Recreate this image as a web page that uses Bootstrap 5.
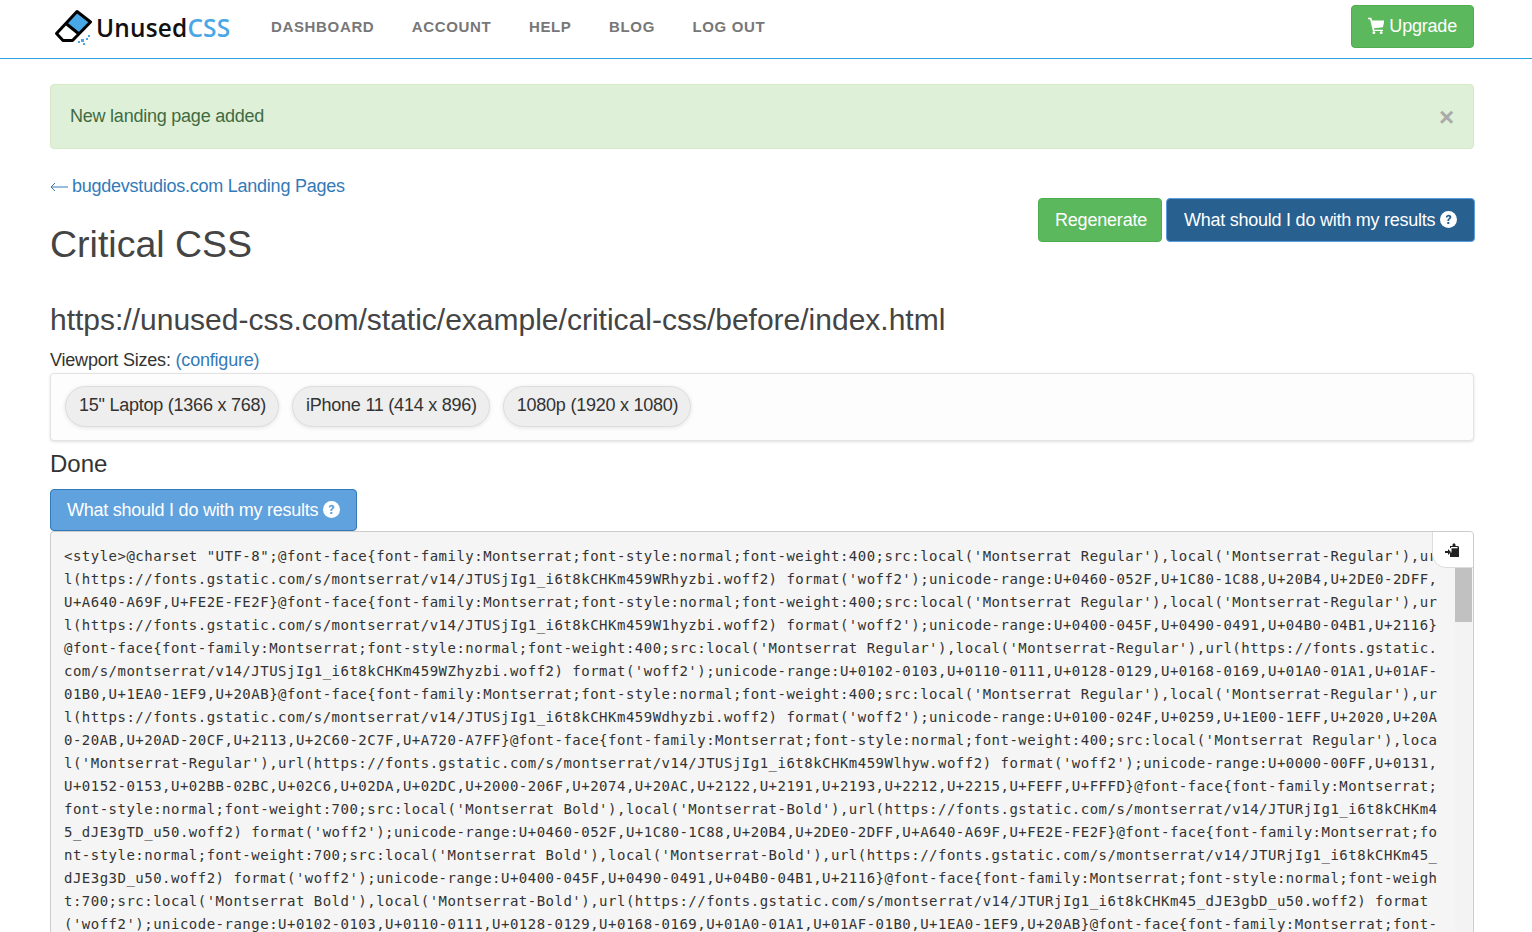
<!DOCTYPE html>
<html lang="en"><head><meta charset="utf-8"><title>Critical CSS</title>
<link href="https://cdn.jsdelivr.net/npm/bootstrap@5.3.0/dist/css/bootstrap.min.css" rel="stylesheet">
<style>
html,body{height:932px;overflow:hidden}
body{font-family:"Liberation Sans",Arial,sans-serif;font-size:18px;color:#333;background:#fff;line-height:1.42857}
a{text-decoration:none;color:#337ab7}
.topbar{height:59px;border-bottom:1px solid #2aa3e6;padding:5px 58px 0 54px}
.brand-word{font-family:"Open Sans",sans-serif;font-weight:600;font-size:24.4px;line-height:1;color:#111;letter-spacing:.2px;padding-top:3px;margin-left:-2px}
.brand-word span{color:#48a7e4}
.brand-box{width:217px}
.menu-link{font-family:"Liberation Sans",sans-serif;font-weight:700;font-size:15px;letter-spacing:.65px;color:#777;text-transform:uppercase}
.menu{gap:37.5px}
.page{padding:25px 58px 0 50px}
.btn-flat{font-size:18px;line-height:24px;padding:9px 16px;border-radius:4px;color:#fff;border:1px solid;letter-spacing:-.2px;white-space:nowrap}
.btn-go,.btn-go:hover{background:#5cb85c;border-color:#4cae4c;color:#fff}
.btn-up{height:43px;width:123px;padding-top:8px;padding-bottom:10px}
.up-label{margin-left:5px;margin-top:1px}
.btn-dark-blue,.btn-dark-blue:hover{background:#286090;border-color:#5b9de0;color:#fff;margin-left:4px;height:44px;width:309px;padding-left:16px;letter-spacing:-.25px}
.btn-regen{height:44px;width:124px}
.btn-mid,.btn-mid:hover{background:#5fa2dd;border-color:#337ab7;color:#fff;height:42px;width:307px;padding-top:8px;letter-spacing:-.25px}
.note{height:65px;background:#dff0d8;border:1px solid #d6e9c6;border-radius:4px;color:#3f6b42;padding:0 19px;margin:0;letter-spacing:-.23px}
.note-x{color:#aaa;font-weight:700;font-size:26px;line-height:1;margin-right:0}
.back{height:26px;margin-top:25px;letter-spacing:-.24px}
.back svg{margin-right:4px;vertical-align:0}
.head-row{height:120px}
.main-title{font-size:37.5px;font-weight:400;color:#444;margin:0;line-height:40px;padding-top:24px}
.head-btns{margin-top:-2px;margin-right:-1px}
.url-title{font-size:30px;font-weight:400;color:#444;line-height:40px;margin:-20px 0 0}
.vp-line{line-height:26px;margin-top:7px;height:26px;letter-spacing:-.2px}
.chip-well{height:68px;border:1px solid #e3e3e3;border-radius:4px;background:#fdfdfd;box-shadow:0 1px 3px rgba(0,0,0,.12);padding:12px 14px;gap:13px}
.chip-item{height:41px;border:1px solid #ddd;border-radius:21px;background:#eee;padding:0 12px 0 13px;line-height:37px;color:#333;box-shadow:0 1px 4px rgba(0,0,0,.1);letter-spacing:-.24px;white-space:nowrap}
.done-text{font-size:24px;font-weight:400;line-height:34px;margin:6px 0 8px;color:#333}
.code-wrap{position:relative;height:460px;border:1px solid #ccc;border-radius:4px 4px 0 0;background:#f5f5f5;overflow:hidden}
.code-text{margin:0;padding:13px 0 0 13px;font-family:"DejaVu Sans Mono",monospace;font-size:14px;letter-spacing:.49px;line-height:23px;color:#333;white-space:pre;overflow:hidden;height:440px}
.copy-tab{position:absolute;right:-1px;top:-1px;width:42px;height:37px;background:#fff;border:1px solid #ddd;border-radius:0 4px 0 14px}
.bar-track{position:absolute;right:1px;top:36px;bottom:0;width:17px;background:#f3f3f3}
.bar-thumb{position:absolute;left:0;top:0;width:17px;height:54px;background:#c1c1c1}
.ico{vertical-align:-2px}
</style></head><body>
<nav class="topbar d-flex align-items-start justify-content-between">
  <div class="d-flex align-items-center" style="height:43px">
    <a href="#" class="brand-box d-flex align-items-center gap-1">
      <svg width="40" height="36" viewBox="0 0 40 36"><path d="M2 25 L21 6 L28 1.500 L37 9 L34 15 L18 32 H9 Z" fill="#fff"/><path d="M12 15 L23 3 L36 13 L25 25 Z" fill="#48a7e4"/><path d="M23 2.500 L36.500 13 L18.500 31.500 H9 L2.500 24.500 Z M12 14.500 L25 25" fill="none" stroke="#000" stroke-width="3" stroke-linejoin="round"/><g fill="#48a7e4"><rect x="27" y="30" width="3" height="3"/><rect x="32" y="29" width="2" height="2"/><rect x="34" y="26" width="2" height="2"/><rect x="29" y="34" width="2" height="2"/><rect x="24" y="32" width="2" height="2"/></g></svg>
      <span class="brand-word">Unused<span>CSS</span></span>
    </a>
    <div class="menu d-flex">
      <a href="#" class="menu-link">Dashboard</a><a href="#" class="menu-link">Account</a><a href="#" class="menu-link">Help</a><a href="#" class="menu-link">Blog</a><a href="#" class="menu-link">Log out</a>
    </div>
  </div>
  <a href="#" class="btn btn-flat btn-go btn-up d-flex align-items-center justify-content-center"><svg width="18" height="18" viewBox="0 0 18 18"><path d="M0 0h3.500l1.200 3H18l-1.500 7.500-10 1 .3 1.500H16.500v1.500H5.300L2.300 1.500H0z" fill="#fff"/><circle cx="6.500" cy="16.300" r="1.600" fill="#fff"/><circle cx="14.500" cy="16.300" r="1.600" fill="#fff"/></svg><span class="up-label">Upgrade</span></a>
</nav>
<main class="page">
  <div class="note alert d-flex align-items-center justify-content-between rounded-1"><span>New landing page added</span><span class="note-x">&times;</span></div>
  <div class="back"><a href="#"><svg width="18" height="10" viewBox="0 0 18 10"><path d="M18 5H1M5 1L1 5l4 4" fill="none" stroke="#337ab7" stroke-width="1"/></svg>bugdevstudios.com Landing Pages</a></div>
  <div class="head-row d-flex justify-content-between">
    <h1 class="main-title">Critical CSS</h1>
    <div class="head-btns d-flex align-items-start">
      <a href="#" class="btn btn-flat btn-go btn-regen">Regenerate</a>
      <a href="#" class="btn btn-flat btn-dark-blue">What should I do with my results <svg class="ico" width="17" height="17" viewBox="0 0 17 17"><circle cx="8.500" cy="8.500" r="8.500" fill="#fff"/><path d="M5.800 6.400c.1-1.700 1.300-2.600 2.900-2.600 1.600 0 2.700 1 2.700 2.300 0 1.100-.6 1.700-1.400 2.200-.6.4-.8.7-.8 1.300v.3H7.400v-.5c0-.9.400-1.500 1.100-2 .6-.4.900-.7.900-1.100 0-.5-.4-.8-.9-.8-.6 0-1 .4-1 1zM7.300 11h2v2h-2z" fill="#286090"/></svg></a>
    </div>
  </div>
  <h2 class="url-title">https://unused-css.com/static/example/critical-css/before/index.html</h2>
  <div class="vp-line">Viewport Sizes: <a href="#">(configure)</a></div>
  <div class="chip-well d-flex">
    <span class="chip-item">15" Laptop (1366 x 768)</span>
    <span class="chip-item">iPhone 11 (414 x 896)</span>
    <span class="chip-item">1080p (1920 x 1080)</span>
  </div>
  <h3 class="done-text">Done</h3>
  <a href="#" class="btn btn-flat btn-mid d-block">What should I do with my results <svg class="ico" width="17" height="17" viewBox="0 0 17 17"><circle cx="8.500" cy="8.500" r="8.500" fill="#fff"/><path d="M5.800 6.400c.1-1.700 1.300-2.600 2.900-2.600 1.600 0 2.700 1 2.700 2.300 0 1.100-.6 1.700-1.400 2.200-.6.4-.8.7-.8 1.300v.3H7.400v-.5c0-.9.400-1.500 1.100-2 .6-.4.900-.7.900-1.100 0-.5-.4-.8-.9-.8-.6 0-1 .4-1 1zM7.300 11h2v2h-2z" fill="#5fa2dd"/></svg></a>
  <div class="code-wrap">
<pre class="code-text">&lt;style&gt;@charset "UTF-8";@font-face{font-family:Montserrat;font-style:normal;font-weight:400;src:local('Montserrat Regular'),local('Montserrat-Regular'),ur
l(https://fonts.gstatic.com/s/montserrat/v14/JTUSjIg1_i6t8kCHKm459WRhyzbi.woff2) format('woff2');unicode-range:U+0460-052F,U+1C80-1C88,U+20B4,U+2DE0-2DFF,
U+A640-A69F,U+FE2E-FE2F}@font-face{font-family:Montserrat;font-style:normal;font-weight:400;src:local('Montserrat Regular'),local('Montserrat-Regular'),ur
l(https://fonts.gstatic.com/s/montserrat/v14/JTUSjIg1_i6t8kCHKm459W1hyzbi.woff2) format('woff2');unicode-range:U+0400-045F,U+0490-0491,U+04B0-04B1,U+2116}
@font-face{font-family:Montserrat;font-style:normal;font-weight:400;src:local('Montserrat Regular'),local('Montserrat-Regular'),url(https://fonts.gstatic.
com/s/montserrat/v14/JTUSjIg1_i6t8kCHKm459WZhyzbi.woff2) format('woff2');unicode-range:U+0102-0103,U+0110-0111,U+0128-0129,U+0168-0169,U+01A0-01A1,U+01AF-
01B0,U+1EA0-1EF9,U+20AB}@font-face{font-family:Montserrat;font-style:normal;font-weight:400;src:local('Montserrat Regular'),local('Montserrat-Regular'),ur
l(https://fonts.gstatic.com/s/montserrat/v14/JTUSjIg1_i6t8kCHKm459Wdhyzbi.woff2) format('woff2');unicode-range:U+0100-024F,U+0259,U+1E00-1EFF,U+2020,U+20A
0-20AB,U+20AD-20CF,U+2113,U+2C60-2C7F,U+A720-A7FF}@font-face{font-family:Montserrat;font-style:normal;font-weight:400;src:local('Montserrat Regular'),loca
l('Montserrat-Regular'),url(https://fonts.gstatic.com/s/montserrat/v14/JTUSjIg1_i6t8kCHKm459Wlhyw.woff2) format('woff2');unicode-range:U+0000-00FF,U+0131,
U+0152-0153,U+02BB-02BC,U+02C6,U+02DA,U+02DC,U+2000-206F,U+2074,U+20AC,U+2122,U+2191,U+2193,U+2212,U+2215,U+FEFF,U+FFFD}@font-face{font-family:Montserrat;
font-style:normal;font-weight:700;src:local('Montserrat Bold'),local('Montserrat-Bold'),url(https://fonts.gstatic.com/s/montserrat/v14/JTURjIg1_i6t8kCHKm4
5_dJE3gTD_u50.woff2) format('woff2');unicode-range:U+0460-052F,U+1C80-1C88,U+20B4,U+2DE0-2DFF,U+A640-A69F,U+FE2E-FE2F}@font-face{font-family:Montserrat;fo
nt-style:normal;font-weight:700;src:local('Montserrat Bold'),local('Montserrat-Bold'),url(https://fonts.gstatic.com/s/montserrat/v14/JTURjIg1_i6t8kCHKm45_
dJE3g3D_u50.woff2) format('woff2');unicode-range:U+0400-045F,U+0490-0491,U+04B0-04B1,U+2116}@font-face{font-family:Montserrat;font-style:normal;font-weigh
t:700;src:local('Montserrat Bold'),local('Montserrat-Bold'),url(https://fonts.gstatic.com/s/montserrat/v14/JTURjIg1_i6t8kCHKm45_dJE3gbD_u50.woff2) format
('woff2');unicode-range:U+0102-0103,U+0110-0111,U+0128-0129,U+0168-0169,U+01A0-01A1,U+01AF-01B0,U+1EA0-1EF9,U+20AB}@font-face{font-family:Montserrat;font-</pre>
    <div class="bar-track"><div class="bar-thumb"></div></div>
    <div class="copy-tab d-flex align-items-center justify-content-center"><svg width="16" height="16" viewBox="0 0 16 16"><path d="M5 4h2.500V2.500L9 1l1.500 1.500V4H13l1 1v10H5v-4.500h1.500V6H5z" fill="#222"/><path d="M0 9h3V7l3 3-3 3v-2H0z" fill="#222"/><rect x="6" y="5" width="6.500" height="1.300" fill="#fff"/></svg></div>
  </div>
</main>
<script src="https://cdn.jsdelivr.net/npm/bootstrap@5.3.0/dist/js/bootstrap.bundle.min.js"></script>
</body></html>
